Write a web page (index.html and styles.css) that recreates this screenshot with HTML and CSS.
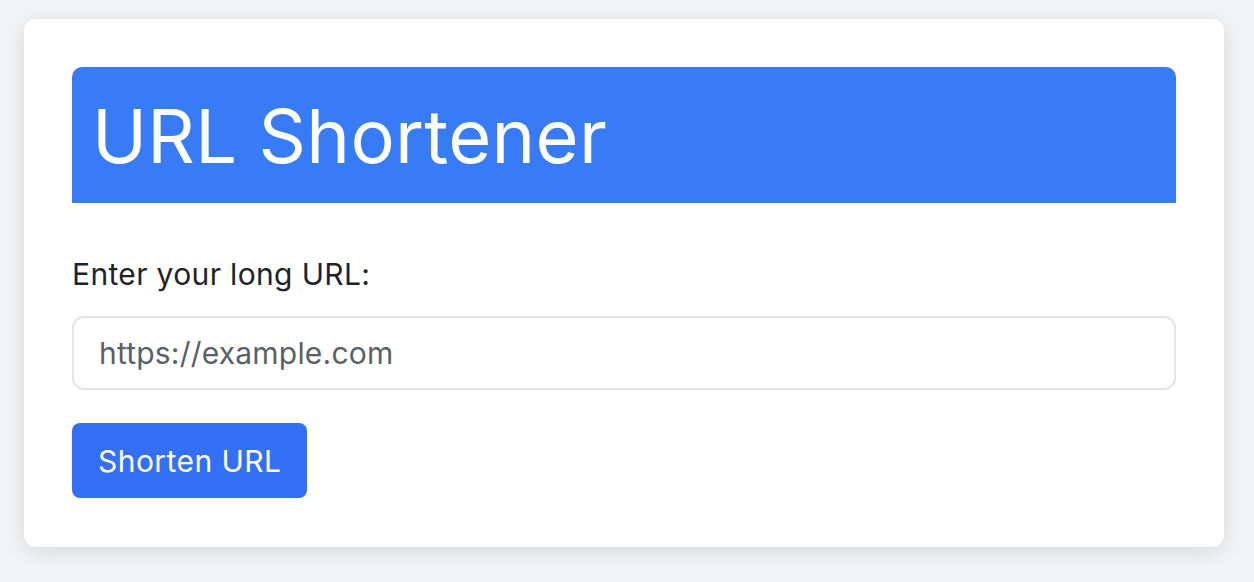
FILE: index.html
```html
<!DOCTYPE html>
<html lang="en">
<head>
<meta charset="utf-8">
<title>URL Shortener</title>
<link rel="stylesheet" href="styles.css">
</head>
<body>
<main class="card">
  <header class="banner"><h1 class="title">URL Shortener</h1></header>
  <form class="form">
    <label class="label" for="url">Enter your long URL:</label>
    <input class="input" id="url" type="text" placeholder="https://example.com">
    <div class="actions"><button class="btn" type="button">Shorten URL</button></div>
  </form>
</main>
</body>
</html>
```
FILE: styles.css
```css
* { box-sizing: border-box; }
html, body { margin: 0; }
body {
  background: #f3f4f6;
  font-family: Inter, "Noto Sans", sans-serif;
  padding: 19px 30px 0 24px;
  height: 582px;
  overflow: hidden;
}
.card {
  width: 1200px;
  height: 528px;
  background: #fff;
  border-radius: 12px;
  box-shadow: 0 4px 24px rgba(0,0,0,0.12);
  padding: 48px;
}
.banner {
  background: #377bf6;
  border-radius: 10px 10px 0 0;
  height: 136px;
  padding: 21px 20px 19px;
}
.title {
  margin: 0;
  color: #fff;
  font-weight: 400;
  font-size: 74px;
  line-height: 96px;
  letter-spacing: 0.3px;
}
.form {
  display: flex;
  flex-direction: column;
  padding-top: 49px;
}
.label {
  font-size: 30px;
  line-height: 45px;
  color: #1f2328;
  margin-bottom: 19px;
  letter-spacing: 0.35px;
}
.input {
  height: 74px;
  border: 2px solid #e3e5e9;
  border-radius: 12px;
  padding: 0 25px;
  font-family: inherit;
  font-size: 30px;
  letter-spacing: 0.2px;
  color: #333;
  outline: none;
}
.input::placeholder { color: #5b5f66; opacity: 1; }
.actions { margin-top: 33px; display: flex; }
.btn {
  height: 75px;
  background: #3470f5;
  color: #fff;
  border: 0;
  border-radius: 8px;
  padding: 0 26px;
  font-family: inherit;
  font-size: 30px;
  letter-spacing: 0.45px;
}
```
